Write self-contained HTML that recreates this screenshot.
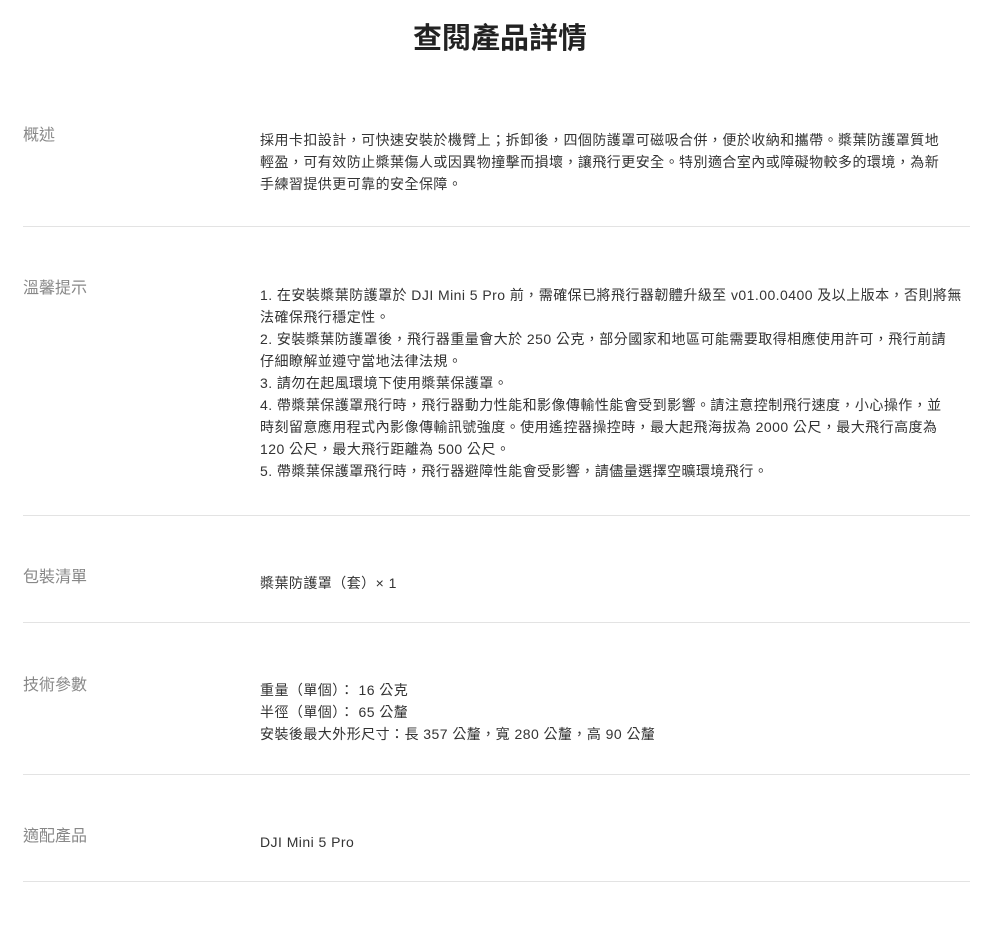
<!DOCTYPE html>
<html><head><meta charset="utf-8">
<style>
*{margin:0;padding:0;box-sizing:border-box}
body{width:1000px;height:930px;background:#fff;position:relative;overflow:hidden;font-family:"Liberation Sans","Noto Sans CJK TC",sans-serif;color:#333}
h1{position:absolute;left:0;width:1000px;top:19px;text-align:center;font-size:29px;font-weight:bold;color:#222;line-height:40px}
.l{position:absolute;left:23px;font-size:16px;color:#888;line-height:24px}
.c{position:absolute;left:260px;font-size:14px;line-height:22px;color:#333;white-space:nowrap;letter-spacing:0.45px}
.d{position:absolute;left:23px;width:947px;height:1px;background:#e3e3e3}
</style></head><body>
<h1>查閱產品詳情</h1>

<div class="l" style="top:124px">概述</div>
<div class="c" style="top:129px">採用卡扣設計，可快速安裝於機臂上；拆卸後，四個防護罩可磁吸合併，便於收納和攜帶。槳葉防護罩質地<br>輕盈，可有效防止槳葉傷人或因異物撞擊而損壞，讓飛行更安全。特別適合室內或障礙物較多的環境，為新<br>手練習提供更可靠的安全保障。</div>
<div class="d" style="top:226px"></div>

<div class="l" style="top:277px">溫馨提示</div>
<div class="c" style="top:284px">1. 在安裝槳葉防護罩於 DJI Mini 5 Pro 前，需確保已將飛行器韌體升級至 v01.00.0400 及以上版本，否則將無<br>法確保飛行穩定性。<br>2. 安裝槳葉防護罩後，飛行器重量會大於 250 公克，部分國家和地區可能需要取得相應使用許可，飛行前請<br>仔細瞭解並遵守當地法律法規。<br>3. 請勿在起風環境下使用槳葉保護罩。<br>4. 帶槳葉保護罩飛行時，飛行器動力性能和影像傳輸性能會受到影響。請注意控制飛行速度，小心操作，並<br>時刻留意應用程式內影像傳輸訊號強度。使用遙控器操控時，最大起飛海拔為 2000 公尺，最大飛行高度為<br>120 公尺，最大飛行距離為 500 公尺。<br>5. 帶槳葉保護罩飛行時，飛行器避障性能會受影響，請儘量選擇空曠環境飛行。</div>
<div class="d" style="top:515px"></div>

<div class="l" style="top:566px">包裝清單</div>
<div class="c" style="top:572px">槳葉防護罩（套）× 1</div>
<div class="d" style="top:622px"></div>

<div class="l" style="top:674px">技術參數</div>
<div class="c" style="top:679px">重量（單個）： 16 公克<br>半徑（單個）： 65 公釐<br>安裝後最大外形尺寸：長 357 公釐，寬 280 公釐，高 90 公釐</div>
<div class="d" style="top:774px"></div>

<div class="l" style="top:825px">適配產品</div>
<div class="c" style="top:831px">DJI Mini 5 Pro</div>
<div class="d" style="top:881px"></div>
</body></html>
